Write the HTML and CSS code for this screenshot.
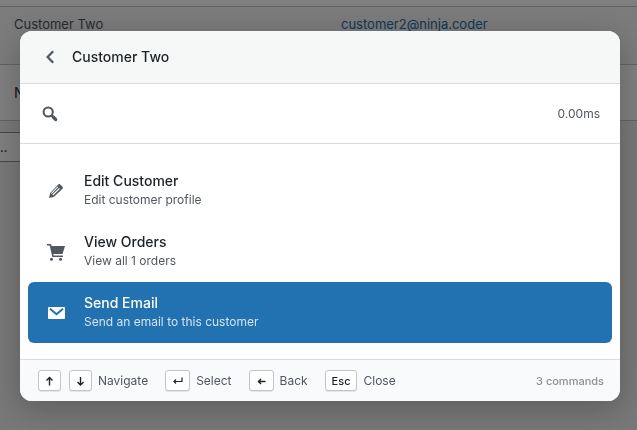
FILE: index.html
```html
<!DOCTYPE html>
<html lang="en">
<head>
<meta charset="utf-8">
<title>Customers</title>
<link rel="stylesheet" href="styles.css">
</head>
<body>
<main class="page">
  <table class="customers">
    <colgroup><col class="name-column"><col></colgroup>
    <tbody>
      <tr class="spacer"><td colspan="2"></td></tr>
      <tr class="customer"><td class="name">Customer Two</td><td><a href="#email">customer2@ninja.coder</a></td></tr>
    </tbody>
    <tfoot>
      <tr><th scope="col" class="name">Name</th><th></th></tr>
    </tfoot>
  </table>
  <button class="bulk" type="button">..</button>
</main>

<div class="overlay">
  <section class="palette" role="dialog" aria-labelledby="palette-title">
    <header class="palette-header">
      <button class="back" type="button" aria-label="Back">
        <svg width="20" height="20" viewBox="0 0 20 20"><path d="M13.2 4.200 7.600 10l5.600 5.800" fill="none" stroke="currentColor" stroke-width="2.200"/></svg>
      </button>
      <h1 id="palette-title">Customer Two</h1>
    </header>
    <div class="search">
      <svg width="20" height="20" viewBox="0 0 20 20"><circle cx="8.200" cy="8" r="4.600" fill="none" stroke="currentColor" stroke-width="2"/><path d="m11.2 11.2 1.800 1.600" stroke="currentColor" stroke-width="2"/><path d="m13.2 13 2.500 2.500" stroke="currentColor" stroke-width="3.200" stroke-linecap="round"/></svg>
      <input type="text" aria-label="Search commands">
      <span class="time">0.00ms</span>
    </div>
    <div class="commands">
      <button class="command" type="button">
        <svg width="20" height="20" viewBox="0 0 20 20"><path fill="currentColor" fill-rule="evenodd" d="m13.9 3.3 2.8 2.8c.4.4.4 1 0 1.4L8.1 15.8 3 17l1.200-5 8.300-8.700c.4-.4 1-.4 1.400 0zM7.200 14.400l6.700-6.700-.8-.8-6.700 6.700zM5.600 12.900l6.700-6.800-.8-.7-6.300 6.600z"/></svg>
        <span class="text"><span class="title">Edit Customer</span><span class="desc">Edit customer profile</span></span>
      </button>
      <button class="command" type="button">
        <svg width="20" height="20" viewBox="0 0 20 20"><path fill="currentColor" d="M1 2h4l.5 2H19l-2.500 8H7.300l.4 1.500H17V15H6.300L3.700 3.500H1z"/><circle cx="5.500" cy="17.200" r="1.500" fill="currentColor"/><circle cx="14.500" cy="17.200" r="1.500" fill="currentColor"/></svg>
        <span class="text"><span class="title">View Orders</span><span class="desc">View all 1 orders</span></span>
      </button>
      <button class="command selected" type="button">
        <svg width="20" height="20" viewBox="0 0 20 20"><rect x="2" y="4" width="17" height="12" rx="1" fill="currentColor"/><path class="flap" d="m4 5.700 6.500 5.500L17 5.700" fill="none" stroke-width="2"/></svg>
        <span class="text"><span class="title">Send Email</span><span class="desc">Send an email to this customer</span></span>
      </button>
    </div>
    <footer class="palette-footer">
      <div class="hint arrows"><kbd><svg width="11" height="12" viewBox="0 0 11 12"><path d="M5.500 10.500v-8M2.500 5.500l3-3 3 3"/></svg></kbd><kbd><svg width="11" height="12" viewBox="0 0 11 12"><path d="M5.500 2v8M2.500 7l3 3 3-3"/></svg></kbd><span>Navigate</span></div>
      <div class="hint"><kbd><svg width="13" height="12" viewBox="0 0 13 12"><path class="thin" d="M11 2.500v4H3M5 4.500l-2 2 2 2"/></svg></kbd><span>Select</span></div>
      <div class="hint"><kbd><svg width="13" height="12" viewBox="0 0 13 12"><path d="M10.500 6.500h-7M6 4 3.500 6.500 6 9"/></svg></kbd><span>Back</span></div>
      <div class="hint"><kbd class="word">Esc</kbd><span>Close</span></div>
      <span class="count">3 commands</span>
    </footer>
  </section>
</div>
</body>
</html>
```
FILE: styles.css
```css
* { box-sizing: border-box; }
body {
  margin: 0;
  background: #f0f0f1;
  color: #50575e;
  font: 13px/20px Inter, "Liberation Sans", sans-serif;
}
button, input { font: inherit; color: inherit; }
svg { display: block; flex: none; }
.page { overflow: hidden; height: 100vh; }
.customers { width: 100%; border-collapse: collapse; background: #fff; table-layout: fixed; }
.customers td, .customers th { padding: 7px 0; text-align: left; vertical-align: top; }
.name-column { width: 341px; }
.customers .name { padding-left: 14px; }
.customers .spacer td { height: 6px; padding: 0; }
.customers .customer { height: 58px; background: #f6f7f7; border-top: 1px solid #c3c4c7; }
.customers tfoot tr { height: 56px; border-top: 1px solid #c3c4c7; border-bottom: 1px solid #c3c4c7; }
.customers tfoot th { padding-top: 18px; font-size: 14px; font-weight: 400; color: #2c3338; }
.customers a { color: #2271b1; text-decoration: none; }
.bulk {
  display: block;
  width: 80px;
  height: 30px;
  margin-top: 11px;
  padding: 0;
  border: 1px solid #8c8f94;
  border-left: 0;
  background: #fff;
  color: #2c3338;
  text-align: left;
}
.overlay {
  position: fixed;
  inset: 0;
  padding: 31px 17px 0 20px;
  background: rgba(0, 0, 0, .5);
}
.palette {
  max-width: 600px;
  overflow: hidden;
  border-radius: 12px;
  background: #fff;
  box-shadow: 0 8px 32px rgba(0, 0, 0, .24);
}
.palette-header {
  display: flex;
  align-items: center;
  gap: 12px;
  height: 53px;
  padding: 0 20px;
  border-bottom: 1px solid #dcdcde;
  background: #f6f7f7;
}
.back { padding: 0; border: 0; background: none; }
h1 { margin: 0; color: #1d2327; font-size: 14px; font-weight: 500; }
.search {
  display: flex;
  align-items: center;
  gap: 12px;
  height: 60px;
  padding: 0 20px;
  border-bottom: 1px solid #dcdcde;
}
.search input { flex: 1; min-width: 0; border: 0; outline: 0; background: none; }
.time { font-size: 12px; line-height: 18px; }
.commands { padding: 16px 8px; }
.command {
  display: flex;
  align-items: center;
  gap: 18px;
  width: 100%;
  padding: 12px 18px;
  border: 0;
  border-radius: 6px;
  background: none;
  text-align: left;
}
.title { display: block; margin-bottom: 2px; color: #1d2327; font-size: 14px; font-weight: 500; line-height: 17px; }
.desc { display: block; font-size: 12px; line-height: 18px; }
.selected { background: #2271b1; color: #fff; }
.selected .title { color: #fff; }
.selected .desc { color: #d3e3ef; }
.flap { stroke: #2271b1; }
.palette-footer {
  display: flex;
  align-items: center;
  gap: 17px;
  height: 42px;
  padding: 0 16px 0 18px;
  border-top: 1px solid #dcdcde;
  background: #f9fafc;
  font-size: 12px;
}
.hint { display: flex; align-items: center; gap: 6px; }
.arrows kbd + kbd { margin-left: 2px; }
kbd {
  display: flex;
  align-items: center;
  justify-content: center;
  height: 21px;
  padding: 0 5px;
  border: 1px solid #c3c4c7;
  border-radius: 3px;
  background: #fff;
  box-shadow: 0 1px 0 rgba(0, 0, 0, .08);
  color: #1d2327;
  font: 500 11px/16px Inter, sans-serif;
}
.word { padding: 0 6px; }
kbd path { fill: none; stroke: #1d2327; stroke-width: 1.4; }
kbd .thin { stroke-width: 1.2; }
.count { margin-left: auto; color: #8c8f94; font-size: 11px; font-weight: 500; }
```
